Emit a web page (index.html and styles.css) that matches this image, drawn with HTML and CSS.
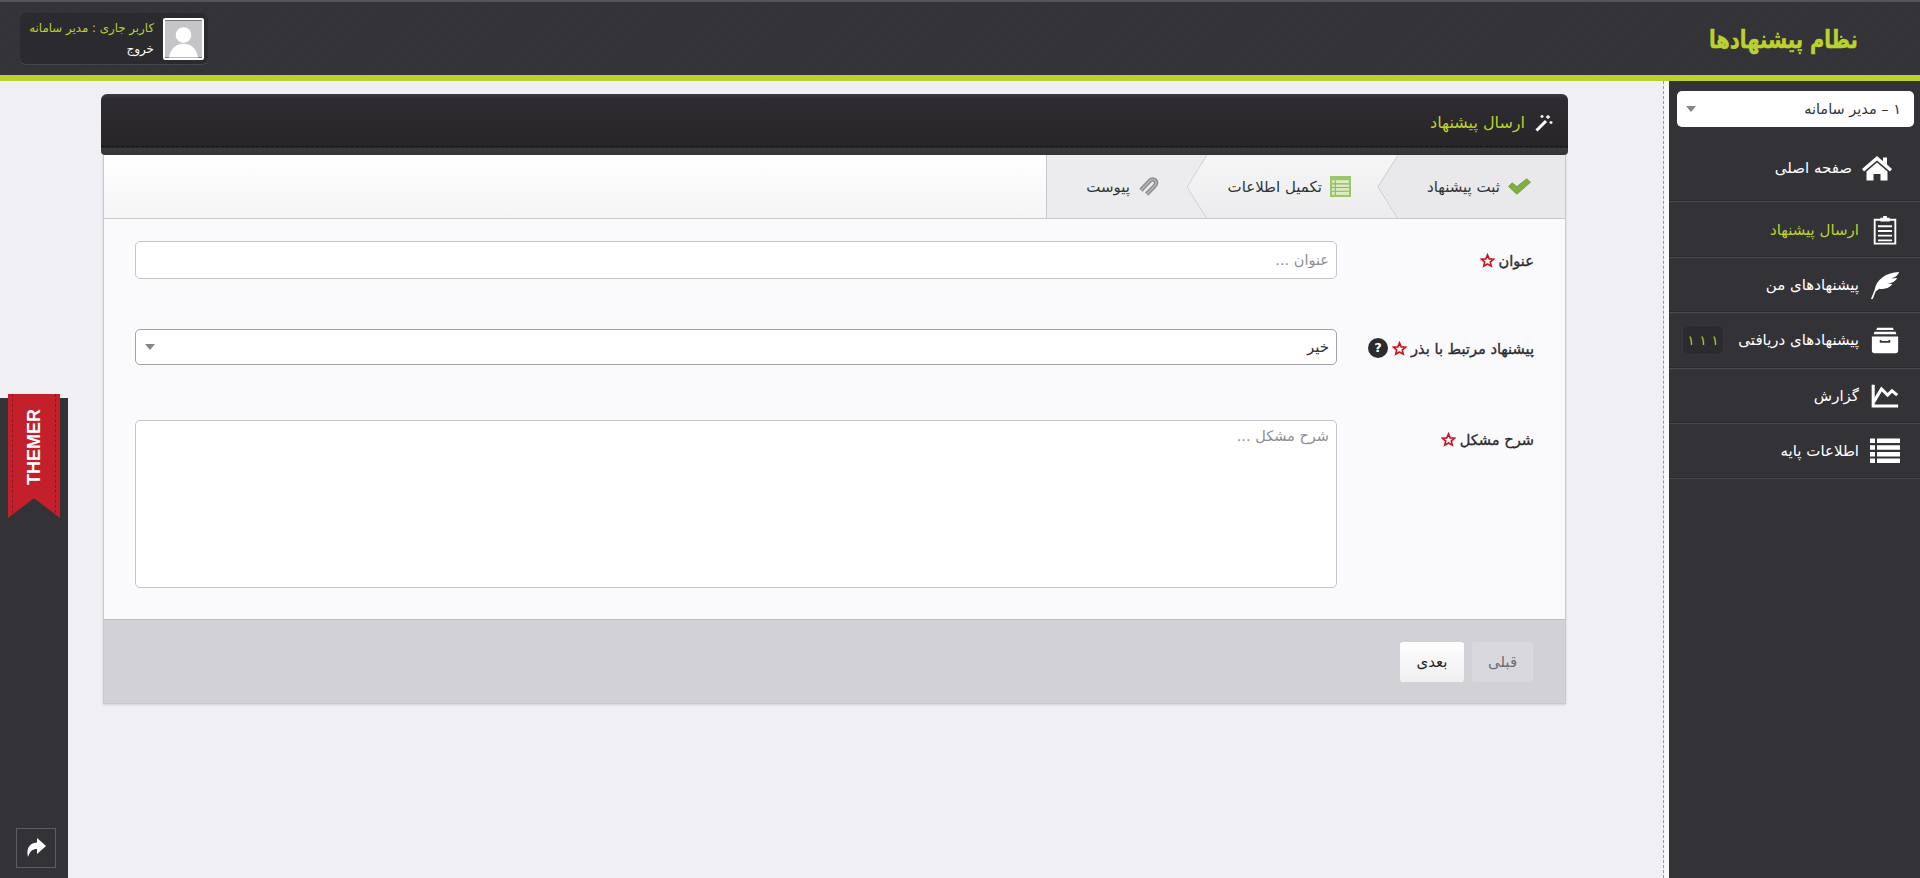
FILE: index.html
```html
<!DOCTYPE html>
<html lang="fa" dir="rtl">
<head>
<meta charset="utf-8">
<title>نظام پیشنهادها</title>
<link rel="stylesheet" href="styles.css">
</head>
<body>
<div class="app">
  <header class="topbar">
    <div class="brand">نظام پیشنهادها</div>
    <div class="user">
      <div class="avatar">
        <svg viewBox="0 0 38 38" class="avatar-svg"><rect width="38" height="38" fill="#c5c4c9"/><circle cx="19" cy="15" r="8" fill="#fff"/><path d="M4 38 C6 28 12 24 19 24 C26 24 32 28 34 38Z" fill="#fff"/></svg>
      </div>
      <div class="user-text">
        <div class="user-name">کاربر جاری : مدیر سامانه</div>
        <div class="user-exit">خروج</div>
      </div>
    </div>
  </header>
  <div class="workspace">
    <aside class="sidebar">
      <div class="role-select"><span>۱ – مدیر سامانه</span><i class="caret"></i></div>
      <nav class="nav">
        <a class="nav-item nav-item--home">
          <svg class="nav-icon" viewBox="0 0 30 26"><path fill="#fff" d="M15 1 L0 14 l2 2.4 L15 5.4 l13 11 2-2.4 -5-4.4 V2.500 h-4 v3.700z M4.500 16.500 L15 7.600 l10.500 8.900 V25.500 h-7 v-6.500 h-7 v6.500 h-7z"/></svg>
          <span>صفحه اصلی</span>
        </a>
        <a class="nav-item nav-item--active">
          <svg class="nav-icon" viewBox="0 0 26 32"><path fill="none" stroke="#fff" stroke-width="2" d="M2 5 H24 V30.500 H2z"/><path fill="#fff" d="M8 3 h3 V1 h4 v2 h3 v4 H8z M5.500 11 h15 v2 h-15z M5.500 16 h15 v2 h-15z M5.500 21 h15 v2 h-15z M5.500 26 h15 v2 h-15z"/></svg>
          <span>ارسال پیشنهاد</span>
        </a>
        <a class="nav-item">
          <svg class="nav-icon" viewBox="0 0 32 30"><path fill="#fff" d="M1 30 L5 20 C7 9 16 2 31 1 C30 4 28 6 23 8 L29 7.500 C27 11 24 13 18 14 L24 14 C21 18 16 20 10 19 L6 22 L3 30z"/></svg>
          <span>پیشنهادهای من</span>
        </a>
        <a class="nav-item">
          <svg class="nav-icon nav-icon--small" viewBox="0 0 32 30"><path fill="#fff" d="M7 1 h18 l1 2.500 H6z M4 5.500 H28 l1 3 H3z M1 11 H31 V27 a3 3 0 0 1 -3 3 H4 a3 3 0 0 1 -3 -3z"/><path fill="none" stroke="#333237" stroke-width="2" d="M11 15 v2 h10 v-2"/></svg>
          <span>پیشنهادهای دریافتی</span>
          <b class="badge"><span>۱</span><span>۱</span><span>۱</span></b>
        </a>
        <a class="nav-item">
          <svg class="nav-icon nav-icon--small" viewBox="0 0 32 28"><path fill="none" stroke="#fff" stroke-width="3.500" d="M2.500 1 V25.500 H31"/><path fill="none" stroke="#fff" stroke-width="3.500" d="M3 21 L12 6 L19 13 L24 8 L30 13"/></svg>
          <span>گزارش</span>
        </a>
        <a class="nav-item">
          <svg class="nav-icon" viewBox="0 0 30 25"><path fill="#fff" d="M0 0 h5 v4.500 H0z M7 0 h23 v4.500 H7z M0 6.700 h5 v4.500 H0z M7 6.700 h23 v4.500 H7z M0 13.400 h5 v4.500 H0z M7 13.400 h23 v4.500 H7z M0 20.100 h5 v4.500 H0z M7 20.100 h23 v4.500 H7z"/></svg>
          <span>اطلاعات پایه</span>
        </a>
      </nav>
    </aside>
    <main class="main">
      <section class="panel">
        <div class="panel-head">
          <svg class="wand" viewBox="0 0 18 18"><path stroke="#fff" stroke-width="3" d="M1.500 16.500 L11 7"/><path stroke="#fff" stroke-width="1.300" d="M13 1 v4 M11 3 h4 M16 7 v3 M14.500 8.500 h3 M7 1 v3 M5.500 2.500 h3"/></svg>
          <span>ارسال پیشنهاد</span>
        </div>
        <div class="card">
          <div class="steps">
            <div class="step step--one">
              <svg class="step-icon" viewBox="0 0 22 16"><path fill="#7fae45" stroke="#5e8a30" stroke-width=".6" d="M0.500 8 L4 4.500 L8.500 8 L18 0.500 L21.500 4 L8.500 15.500z"/></svg>
              <span>ثبت پیشنهاد</span>
              <svg class="step-edge" viewBox="0 0 21 64"><path fill="none" stroke="#cfcfd2" d="M21 0 L1 32 L21 64"/></svg>
            </div>
            <div class="step step--two">
              <svg class="step-icon" viewBox="0 0 20 20"><rect width="20" height="20" fill="#9cc66c"/><rect x="2" y="4" width="16" height="14" fill="#dbecc2"/><path stroke="#8ab558" d="M2 7.500 h16 M2 11 h16 M2 14.500 h16 M5 4 v14"/></svg>
              <span>تکمیل اطلاعات</span>
              <svg class="step-edge" viewBox="0 0 21 64"><path fill="none" stroke="#cfcfd2" d="M21 0 L1 32 L21 64"/></svg>
            </div>
            <div class="step step--three">
              <svg class="step-icon" viewBox="0 0 22 22"><path fill="none" stroke="#8b8b8d" stroke-width="4.500" d="M3 15 L13 4.500 C15 2.500 19 4 19 7 C19 9 18 10 17 11 L9 19"/><path fill="none" stroke="#b9b9bb" stroke-width="1.500" d="M3 15 L13 4.500 C15 2.500 19 4 19 7 C19 9 18 10 17 11 L9 19"/></svg>
              <span>پیوست</span>
            </div>
          </div>
          <form class="form">
            <div class="row">
              <label class="field-label">عنوان <svg class="star" viewBox="0 0 20 19"><use href="#star"/></svg></label>
              <input class="input" type="text" placeholder="عنوان ...">
            </div>
            <div class="row">
              <label class="field-label">پیشنهاد مرتبط با بذر <svg class="star" viewBox="0 0 20 19"><use href="#star"/></svg> <i class="help">?</i></label>
              <div class="select"><span>خیر</span><i class="caret"></i></div>
            </div>
            <div class="row row--tall">
              <label class="field-label">شرح مشکل <svg class="star" viewBox="0 0 20 19"><use href="#star"/></svg></label>
              <textarea class="input textarea" placeholder="شرح مشکل ..."></textarea>
            </div>
          </form>
          <div class="actions">
            <button class="btn btn--off" type="button">قبلی</button>
            <button class="btn" type="button">بعدی</button>
          </div>
        </div>
      </section>
    </main>
    <aside class="rail">
      <div class="ribbon"><span>THEMER</span></div>
      <a class="rail-btn">
        <svg viewBox="0 0 24 24" class="rail-icon"><path fill="#fff" d="M22 10 L13 2 V6.500 C5 7 2 13 4 21 C6 15 8.500 13 13 13 V18z"/></svg>
      </a>
    </aside>
  </div>
</div>
<svg class="defs" width="0" height="0"><defs><path id="star" fill="none" stroke="#c9171f" stroke-width="2.200" stroke-linejoin="miter" d="M10 2 L12.300 7.300 L18 7.800 L13.700 11.500 L15 17 L10 14.100 L5 17 L6.300 11.500 L2 7.800 L7.700 7.300z"/></defs></svg>
</body>
</html>
```
FILE: styles.css
```css
* { box-sizing: border-box; }
html, body { margin: 0; height: 100%; overflow: hidden; }
body {
  font-family: "DejaVu Sans", "Noto Sans", sans-serif;
  background: #f0eff3;
  color: #2c2b30;
  font-size: 13px;
}
.defs { position: absolute; }
.app { height: 878px; display: flex; flex-direction: column; }

.topbar {
  height: 81px;
  flex: none;
  display: flex;
  align-items: flex-start;
  justify-content: space-between;
  padding: 11px 62px 0 20px;
  background:
    repeating-linear-gradient(135deg, rgba(255,255,255,.014) 0 1px, transparent 1px 3px),
    #333237;
  border-top: 2px solid #55545a;
  border-bottom: 6px solid #bbd22e;
}
.brand {
  font-size: 25px;
  font-weight: 700;
  color: #bbd22e;
  -webkit-text-stroke: .5px #bbd22e;
  line-height: 42px;
  margin-top: 6px;
  transform: scaleX(.78);
  transform-origin: right center;
}
.user {
  width: 188px;
  height: 51px;
  display: flex;
  align-items: center;
  gap: 9px;
  padding-right: 4px;
  background: #2b2a2e;
  border-radius: 6px;
  box-shadow: 0 1px 0 #46454b;
}
.avatar { width: 41px; height: 42px; border: 2px solid #fff; border-radius: 2px; flex: none; overflow: hidden; }
.avatar-svg { display: block; width: 100%; height: 100%; }
.user-name { color: #bbd22e; font-size: 11.800px; line-height: 20px; white-space: nowrap; }
.user-exit { color: #fff; font-size: 12px; line-height: 22px; }

.workspace { flex: 1; display: flex; min-height: 0; }

.sidebar {
  width: 256px;
  flex: none;
  background: #333237;
  border-left: 5px solid #f8f8fa;
  padding-top: 10px;
}
.role-select {
  height: 36px;
  margin: 0 6px 20px 8px;
  background: #fff;
  border-radius: 5px;
  display: flex;
  align-items: center;
  justify-content: space-between;
  padding: 0 13px 0 9px;
  font-size: 14.500px;
  color: #333;
}
.caret { width: 0; height: 0; border-style: solid; border-width: 6px 5px 0; border-color: #85858a transparent transparent; flex: none; }
.nav-item {
  height: 55.400px;
  display: flex;
  align-items: center;
  gap: 11px;
  padding: 0 20px 0 13px;
  color: #fff;
  font-size: 15px;
  white-space: nowrap;
  border-bottom: 1px solid #4a494f;
  box-shadow: inset 0 -1px 0 #2a292d;
}
.nav-item--home { padding-right: 28px; padding-bottom: 13px; gap: 10px; }
.nav-item--active { color: #bbd22e; }
.nav-icon { width: 30px; height: 30px; flex: none; }
.nav-icon--small { width: 28px; height: 28px; margin-left: 1px; margin-right: 1px; }
.badge {
  margin-right: auto;
  width: 42px;
  height: 30px;
  border-radius: 7px;
  background: #2b2a2e;
  box-shadow: inset 0 0 0 1px #38373c;
  color: #bbd22e;
  display: flex;
  align-items: center;
  justify-content: center;
  gap: 5px;
  font-weight: 400;
  font-size: 13px;
}

.main {
  flex: 1;
  min-width: 0;
  border-right: 1px dashed #9a9a9e;
  padding: 13px 95px 0 33px;
}
.panel-head {
  height: 61px;
  border-radius: 6px 6px 4px 4px;
  background: linear-gradient(#3b3a3f 0, #2e2c30 8%, #272528 88%, #3a393e 89%, #333237 100%);
  display: flex;
  align-items: center;
  gap: 10px;
  padding: 0 15px 4px 0;
  color: #bbd22e;
  font-size: 16px;
  position: relative;
}
.panel-head::after {
  content: "";
  position: absolute;
  inset: auto 0 8px 0;
  border-bottom: 1px dashed #17161a;
}
.wand { width: 18px; height: 18px; flex: none; }
.card { margin: 0 2px; border: 1px solid #c9c9cc; border-top: 0; background: #faf9fb; box-shadow: 0 1px 2px rgba(0,0,0,.12); }

.steps {
  height: 64px;
  display: flex;
  border-bottom: 1px solid #c8c8cb;
  background: linear-gradient(#fff, #f5f5f6);
}
.step {
  position: relative;
  display: flex;
  align-items: center;
  gap: 8px;
  color: #333;
  font-size: 15px;
  white-space: nowrap;
  background: var(--step-bg);
}
.step::after {
  content: "";
  position: absolute;
  top: 0;
  bottom: 0;
  left: -21px;
  width: 21px;
  background: var(--step-bg);
  clip-path: polygon(100% 0, 0 50%, 100% 100%);
}
.step--one { --step-bg: #e9e9eb; width: 167px; padding-right: 34px; z-index: 3; }
.step--two { --step-bg: linear-gradient(#f6f6f7, #ececee); width: 191px; padding-right: 47px; z-index: 2; }
.step--three { --step-bg: #ececee; width: 161px; padding-right: 48px; border-left: 1px solid #c8c8cb; z-index: 1; }
.step--three::after { display: none; }
.step-icon { width: 21px; height: 21px; flex: none; }
.step--one .step-icon { width: 23px; }
.step-edge { position: absolute; left: -21px; top: 0; width: 21px; height: 64px; z-index: 1; }

.form {
  padding: 22px 31px 31px;
  display: flex;
  flex-direction: column;
  gap: 50px;
}
.row { display: grid; grid-template-columns: 197px 1fr; align-items: start; }
.row--tall { margin-top: 3px; }
.field-label {
  height: 38px;
  display: flex;
  align-items: center;
  gap: 4px;
  font-size: 14.600px;
  color: #2c2b30;
  -webkit-text-stroke: .35px #2c2b30;
  white-space: nowrap;
}
.star { width: 15px; height: 15px; flex: none; }
.help {
  width: 20px;
  height: 20px;
  border-radius: 50%;
  background: #2c2b30;
  color: #fff;
  font-style: normal;
  font-weight: 700;
  font-size: 13px;
  line-height: 20px;
  text-align: center;
  -webkit-text-stroke: 0;
}
.input {
  display: block;
  width: 100%;
  height: 38px;
  padding: 0 7px;
  border: 1px solid #c6c6ca;
  border-radius: 5px;
  background: #fff;
  font: 14.500px "DejaVu Sans", sans-serif;
  color: #333;
  outline: 0;
}
.input::placeholder { color: #8e8e92; opacity: 1; }
.textarea { height: 168px; padding-top: 7px; resize: none; }
.select {
  height: 36px;
  border: 1px solid #a2a2a6;
  border-radius: 5px;
  background: #fff;
  display: flex;
  align-items: center;
  justify-content: space-between;
  padding: 0 7px 0 9px;
  font-size: 15px;
  color: #333;
}
.actions {
  height: 84px;
  border-top: 1px solid #bdbcc0;
  background: #d2d1d5;
  display: flex;
  gap: 8px;
  padding: 22px 32px 0 0;
}
.btn {
  width: 64px;
  height: 40px;
  border: 0;
  border-radius: 3px;
  background: linear-gradient(#fff, #efeff0);
  color: #222;
  font: 15px "DejaVu Sans", sans-serif;
}
.btn--off { width: 61px; background: #d9d8dc; color: #6e6e72; }

.rail {
  width: 68px;
  flex: none;
  margin-top: 317px;
  background: #333237;
  position: relative;
  display: flex;
  align-items: flex-end;
  justify-content: flex-end;
  padding: 0 0 10px 16px;
}
.ribbon {
  position: absolute;
  left: 8px;
  top: -4px;
  width: 52px;
  height: 124px;
  background: #c4202c;
  clip-path: polygon(0 0, 100% 0, 100% 100%, 50% 84%, 0 100%);
  display: flex;
  align-items: flex-start;
  justify-content: center;
  padding-top: 15px;
}
.ribbon::before {
  content: "";
  position: absolute;
  inset: 0 4px;
  border-left: 1px dashed #8f1520;
  border-right: 1px dashed #8f1520;
}
.ribbon span {
  writing-mode: vertical-rl;
  transform: rotate(180deg);
  direction: ltr;
  font: 700 18px/1 "Liberation Sans", sans-serif;
  color: #fff;
}
.rail-btn {
  width: 40px;
  height: 40px;
  border: 1px solid #5e5d63;
  display: flex;
  align-items: center;
  justify-content: center;
}
.rail-icon { width: 24px; height: 24px; }
```
